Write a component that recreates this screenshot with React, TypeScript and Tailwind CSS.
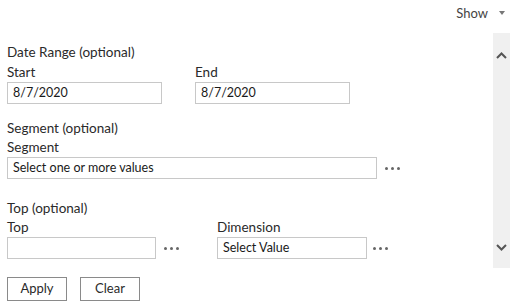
import React from "react";

const Dots = ({ className = "" }: { className?: string }) => (
  <div className={`flex items-center gap-[3px] ${className}`}>
    <span className="w-[3px] h-[3px] rounded-full bg-[#666]" />
    <span className="w-[3px] h-[3px] rounded-full bg-[#666]" />
    <span className="w-[3px] h-[3px] rounded-full bg-[#666]" />
  </div>
);

const Input = ({ value, className = "" }: { value?: string; className?: string }) => (
  <div className={`h-[22px] border border-[#c8c8c8] flex items-center px-[5px] text-[12.5px] text-[#1a1a1a] ${className}`}>
    {value}
  </div>
);

export default function App() {
  return (
    <div
      className="w-[519px] h-[305px] bg-white text-[#2a2a2a] overflow-hidden"
      style={{ fontFamily: '"Segoe UI", Lato, "Noto Sans", sans-serif' }}
    >
      <div className="h-[33px] flex items-start justify-end pr-[14px] pt-[4px]">
        <span className="text-[13px] text-[#444] leading-[18px]">Show</span>
        <svg width="6" height="4" viewBox="0 0 6 4" className="ml-[11px] mt-[7px]">
          <path d="M0 0 L6 0 L3 4 Z" fill="#777" />
        </svg>
      </div>
      <div className="flex h-[235px]">
        <div className="flex-1 pl-[7px] pt-[9px] text-[13.5px]">
          <div className="leading-[20px]">Date Range (optional)</div>
          <div className="flex">
            <div className="w-[188px]">
              <div className="leading-[20px]">Start</div>
              <Input value="8/7/2020" className="w-[155px]" />
            </div>
            <div>
              <div className="leading-[20px]">End</div>
              <Input value="8/7/2020" className="w-[155px]" />
            </div>
          </div>
          <div className="leading-[20px] mt-[14px]">Segment (optional)</div>
          <div className="leading-[19px]">Segment</div>
          <div className="flex items-center">
            <Input value="Select one or more values" className="w-[370px]" />
            <Dots className="ml-[8px]" />
          </div>
          <div className="leading-[20px] mt-[19px]">Top (optional)</div>
          <div className="flex">
            <div className="w-[210px]">
              <div className="leading-[19px]">Top</div>
              <div className="flex items-center">
                <Input className="w-[149px]" />
                <Dots className="ml-[8px]" />
              </div>
            </div>
            <div>
              <div className="leading-[19px]">Dimension</div>
              <div className="flex items-center">
                <Input value="Select Value" className="w-[150px]" />
                <Dots className="ml-[6px]" />
              </div>
            </div>
          </div>
        </div>
        <div className="w-[17px] mr-[9px] bg-[#f0f0f0] flex flex-col items-center justify-between pt-[19px] pb-[17px]">
          <svg width="11" height="7" viewBox="0 0 11 7">
            <path d="M1 6 L5.5 1.5 L10 6" stroke="#555" strokeWidth="2" fill="none" />
          </svg>
          <svg width="11" height="7" viewBox="0 0 11 7">
            <path d="M1 1 L5.5 5.5 L10 1" stroke="#555" strokeWidth="2" fill="none" />
          </svg>
        </div>
      </div>
      <div className="flex gap-[13px] pl-[7px] mt-[9px]">
        <button className="w-[60px] h-[24px] border border-[#8a8a8a] text-[13px] text-[#2a2a2a] bg-white">Apply</button>
        <button className="w-[60px] h-[24px] border border-[#8a8a8a] text-[13px] text-[#2a2a2a] bg-white">Clear</button>
      </div>
    </div>
  );
}
